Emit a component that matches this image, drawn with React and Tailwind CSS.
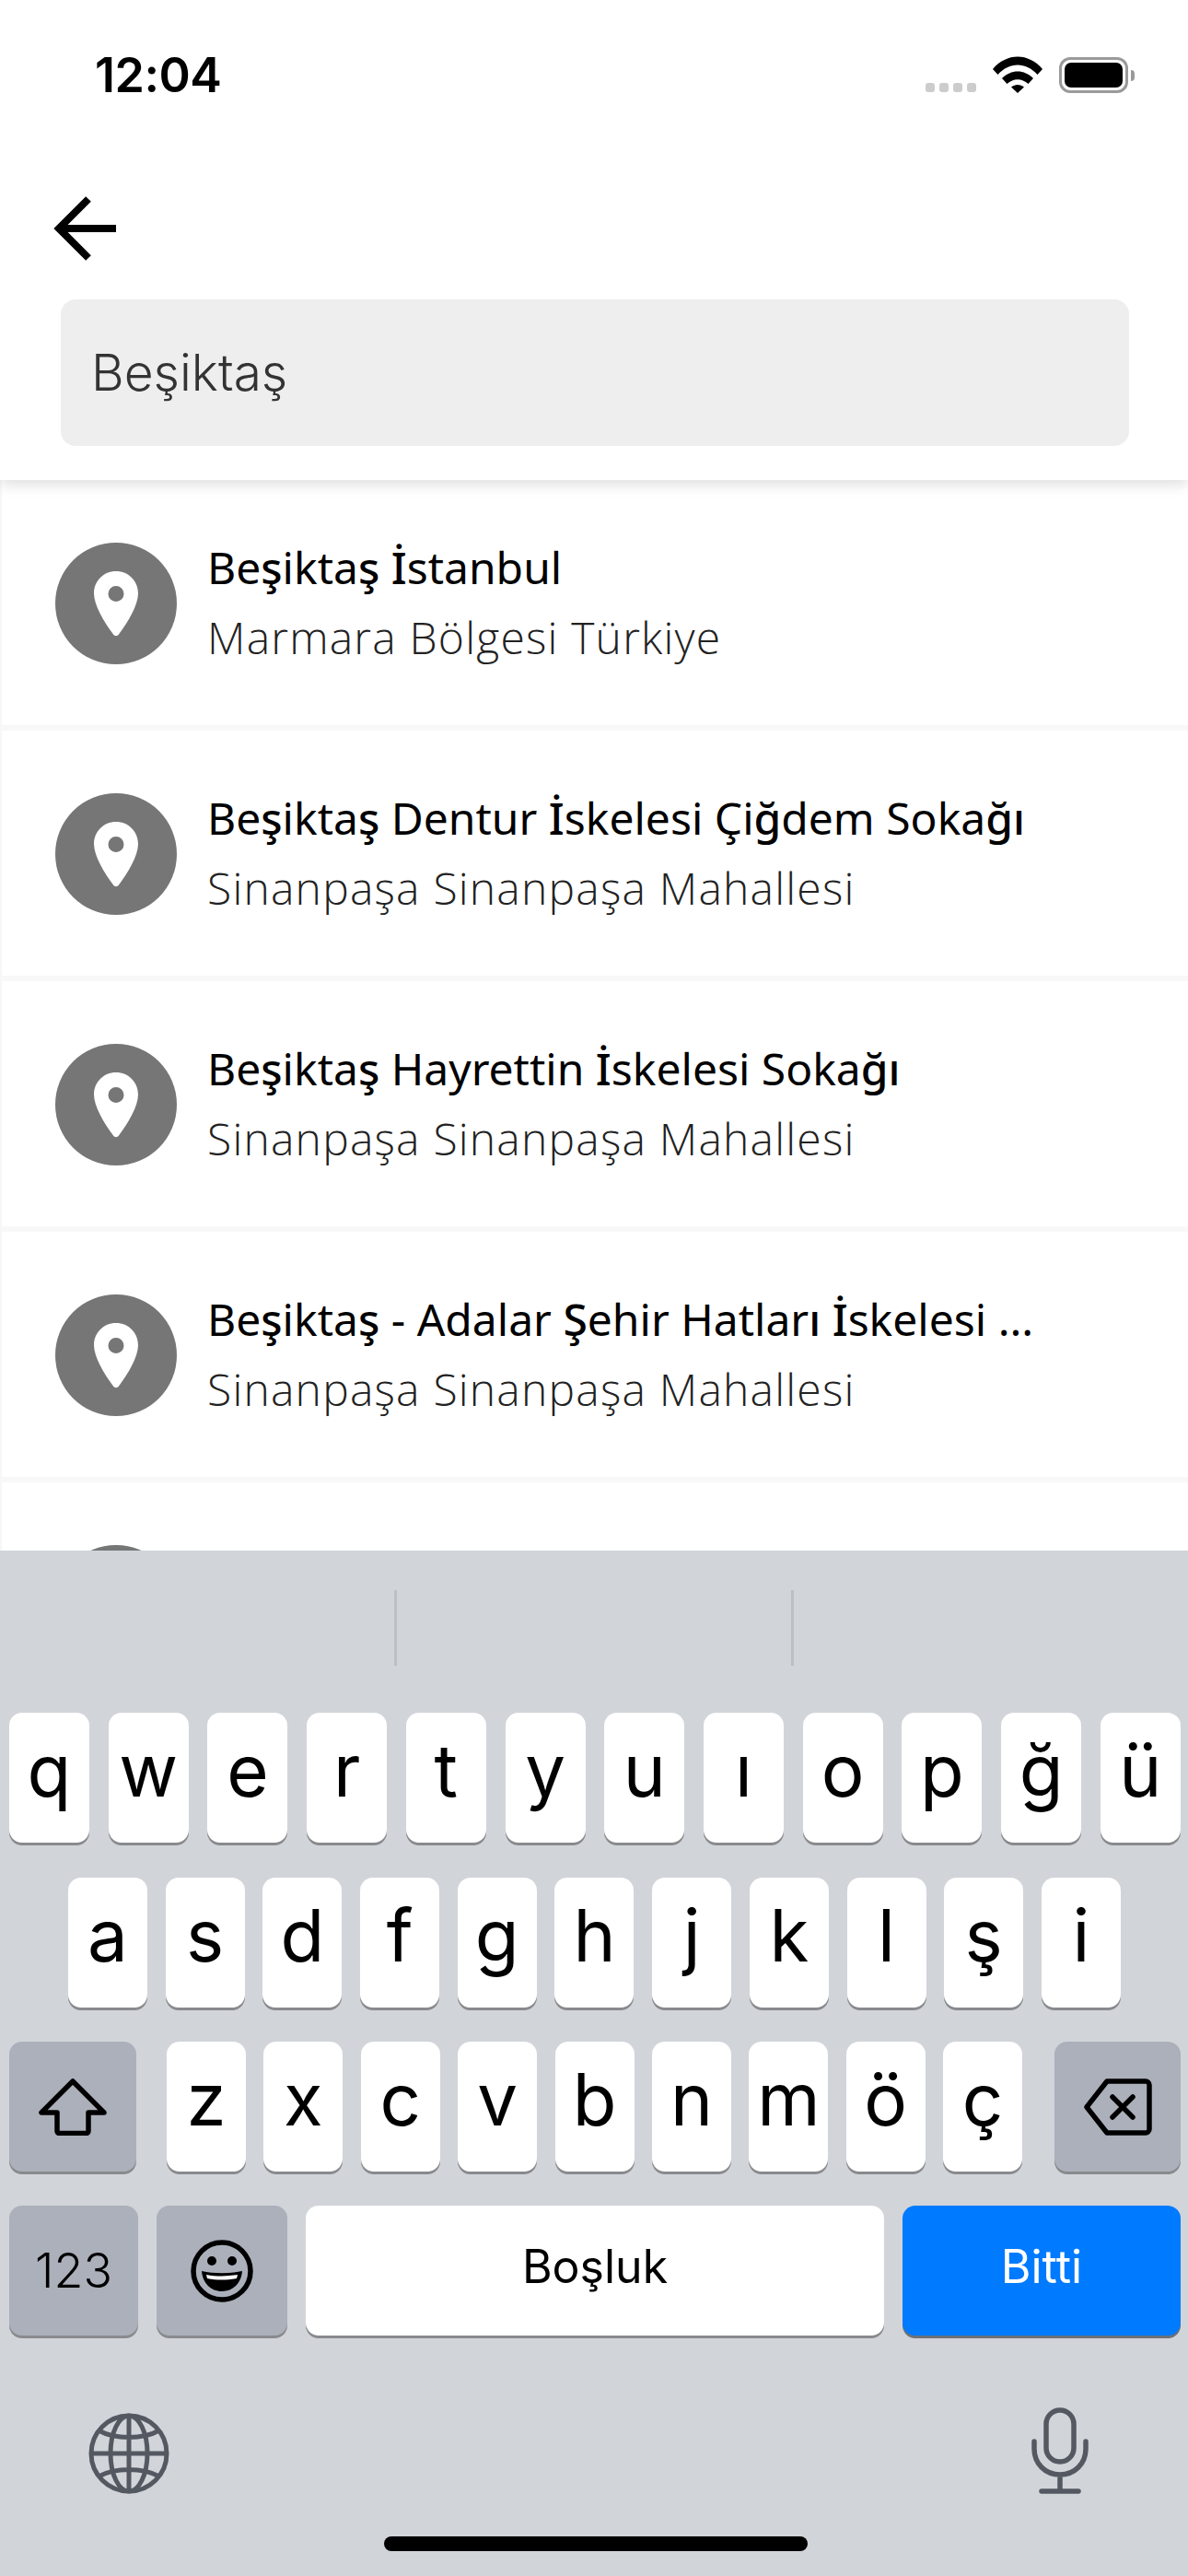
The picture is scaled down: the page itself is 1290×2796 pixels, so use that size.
const rows = [
  { title: 'Beşiktaş İstanbul', sub: 'Marmara Bölgesi Türkiye' },
  { title: 'Beşiktaş Dentur İskelesi Çiğdem Sokağı', sub: 'Sinanpaşa Sinanpaşa Mahallesi' },
  { title: 'Beşiktaş Hayrettin İskelesi Sokağı', sub: 'Sinanpaşa Sinanpaşa Mahallesi' },
  { title: 'Beşiktaş - Adalar Şehir Hatları İskelesi ...', sub: 'Sinanpaşa Sinanpaşa Mahallesi' },
];

const row1 = ['q', 'w', 'e', 'r', 't', 'y', 'u', 'ı', 'o', 'p', 'ğ', 'ü'];
const row2 = ['a', 's', 'd', 'f', 'g', 'h', 'j', 'k', 'l', 'ş', 'i'];
const row3 = ['z', 'x', 'c', 'v', 'b', 'n', 'm', 'ö', 'ç'];

// the turkish letters come out heavier than the rest of the title
function Title({ text }) {
  return text.split(/([şŞİğı])/).map((part, i) =>
    i % 2 === 1 ? <span key={i} className="font-medium">{part}</span> : part
  );
}

function Pin() {
  return (
    <div className="w-[132px] h-[132px] mt-[2px] rounded-full bg-[#767676] flex items-center justify-center shrink-0">
      <svg width="50" height="72" viewBox="0 0 50 72">
        <path
          fillRule="evenodd"
          d="M25 1C11.5 1 1 11.5 1 25c0 13 11 31 21 44.5 1.6 2.2 4.4 2.2 6 0C38 56 49 38 49 25 49 11.5 38.500 1 25 1Zm0 16a8.500 8.500 0 1 1 0 17 8.500 8.500 0 0 1 0-17Z"
          fill="#fff"
        />
      </svg>
    </div>
  );
}

function Key({ label, className = 'w-[86px]' }) {
  return (
    <div className={`${className} h-[141px] pb-[17px] rounded-[14px] bg-white shadow-[0_3px_0_#898a8d] flex items-center justify-center text-[78px] text-black font-['Inter',sans-serif]`}>
      {label}
    </div>
  );
}

function GreyKey({ children, className }) {
  return (
    <div className={`${className} h-[141px] shrink-0 rounded-[14px] bg-[#abb0ba] shadow-[0_3px_0_#898a8d] flex items-center justify-center text-black font-['Inter',sans-serif]`}>
      {children}
    </div>
  );
}

export default function App() {
  return (
    <div className="w-[1290px] h-[2796px] bg-white flex flex-col overflow-hidden font-['Inter',sans-serif]">
      {/* Header */}
      <div className="relative z-10 h-[521px] bg-white shadow-[0_5px_14px_rgba(0,0,0,0.13)] shrink-0">
        <div className="h-[164px] flex items-start justify-between pt-[51px] pl-[103px] pr-[58px]">
          <span className="text-[52px] leading-[62px] font-semibold tracking-[-0.5px] text-black">12:04</span>
          <div className="flex items-end gap-[18px] h-[41px] mt-[9px]">
            <div className="flex gap-[5px] pb-[1px]">
              <span className="w-[10px] h-[10px] rounded-[3px] bg-[#cccccc]" />
              <span className="w-[10px] h-[10px] rounded-[3px] bg-[#cccccc]" />
              <span className="w-[10px] h-[10px] rounded-[3px] bg-[#cccccc]" />
              <span className="w-[10px] h-[10px] rounded-[3px] bg-[#cccccc]" />
            </div>
            <svg width="54" height="40" viewBox="0 0 54 40">
              <path d="M0 14C15-4 39-4 54 14l-5.500 6C36 6 18 6 5.500 20Z" fill="#000" />
              <path d="M10 24c10-10 24-10 34 0l-5.500 6c-7-6.500-16-6.500-23 0Z" fill="#000" />
              <path d="M20 33.500c4-3.500 10-3.500 14 0L27 40Z" fill="#000" />
            </svg>
            <div className="flex items-center gap-[3px]">
              <div className="w-[75px] h-[39px] rounded-[12px] border-[3px] border-[#9a9a9a] p-[3px]">
                <div className="w-full h-full rounded-[7px] bg-black" />
              </div>
              <div className="w-[4px] h-[12px] rounded-r-full bg-[#9a9a9a]" />
            </div>
          </div>
        </div>
        <svg className="ml-[58px] mt-[48px]" width="72" height="72" viewBox="0 0 72 72">
          <path d="M38 4 6 36l32 32M6 36h62" fill="none" stroke="#000" strokeWidth="8" />
        </svg>
        <div className="mx-[66px] mt-[41px] w-[1160px] h-[159px] rounded-[16px] bg-[#eeeeee] flex items-center pl-[33px] text-[55px] font-light text-[#333333]">
          Beşiktaş
        </div>
      </div>

      {/* Results */}
      <div className="flex-1 min-h-0 overflow-hidden border-l-2 border-[#f7f7f7]">
        {[...rows, { title: '', sub: '' }].map((r, i) => (
          <div key={i} className="h-[272px] border-b-[6px] border-[#f8f8f8] pl-[58px] flex items-center gap-[33px]">
            <Pin />
            <div className="flex flex-col">
              <span className="text-[48px] leading-[76px] text-black font-['Noto_Sans',sans-serif]"><Title text={r.title} /></span>
              <span className="text-[48px] leading-[76px] font-light tracking-[1.2px] text-[#222222] font-['Open_Sans',sans-serif]">{r.sub}</span>
            </div>
          </div>
        ))}
      </div>

      {/* Keyboard */}
      <div className="relative h-[1113px] shrink-0 bg-[#d1d4d9] flex flex-col">
        <div className="h-[176px] flex items-center pl-[428px] pb-[9px]">
          <span className="w-[3px] h-[82px] bg-[#bcbfc5]" />
          <span className="w-[3px] h-[82px] bg-[#bcbfc5] ml-[428px]" />
        </div>
        <div className="flex justify-between pl-[10px] pr-[8px]">
          {row1.map((k) => <Key key={k} label={k} className="w-[87px]" />)}
        </div>
        <div className="flex justify-between pl-[74px] pr-[73px] mt-[38px]">
          {row2.map((k) => <Key key={k} label={k} />)}
        </div>
        <div className="flex pl-[10px] pr-[8px] mt-[37px]">
          <GreyKey className="w-[138px]">
            <svg width="74" height="62" viewBox="0 0 74 62">
              <path d="M37 3 3 37h17v20c0 1.500 1 2.500 2.500 2.500h29c1.500 0 2.500-1 2.500-2.500V37h17Z" fill="none" stroke="#000" strokeWidth="5.500" strokeLinejoin="round" />
            </svg>
          </GreyKey>
          <div className="flex gap-[19.4px] ml-[33px]">
            {row3.map((k) => <Key key={k} label={k} />)}
          </div>
          <GreyKey className="w-[137px] ml-auto">
            <svg width="74" height="62" viewBox="0 0 74 62">
              <path d="M25 3h42c2 0 4 2 4 4v48c0 2-2 4-4 4H25L3 31Z" fill="none" stroke="#000" strokeWidth="5.500" strokeLinejoin="round" />
              <path d="M31 20l22 22M53 20 31 42" fill="none" stroke="#000" strokeWidth="5.500" strokeLinecap="round" />
            </svg>
          </GreyKey>
        </div>
        <div className="flex gap-[20px] pl-[10px] pr-[8px] mt-[37px]">
          <GreyKey className="w-[140px] text-[52px] font-light">123</GreyKey>
          <GreyKey className="w-[142px]">
            <svg width="70" height="70" viewBox="0 0 70 70">
              <circle cx="35" cy="35" r="31" fill="none" stroke="#000" strokeWidth="5.500" />
              <circle cx="24" cy="24" r="5" fill="#000" />
              <circle cx="46" cy="24" r="5" fill="#000" />
              <path d="M13 35c13 3 31 3 44 0-1 13-10 22-22 22S14 48 13 35Z" fill="#000" />
              <path d="M18 39c11 2 23 2 34 0l-1 4c-10 2-22 2-32 0Z" fill="#fff" />
            </svg>
          </GreyKey>
          <div className="w-[628px] h-[141px] shrink-0 rounded-[14px] bg-white shadow-[0_3px_0_#898a8d] flex items-center justify-center pb-[8px] text-[50px] text-black">Boşluk</div>
          <div className="w-[302px] h-[141px] shrink-0 rounded-[14px] bg-[#007aff] shadow-[0_3px_0_#6b7178] flex items-center justify-center pb-[8px] text-[50px] text-white">Bitti</div>
        </div>
        <div className="flex justify-between items-start pl-[95px] pr-[108px] mt-[78px]">
          <svg className="mt-[5px]" width="90" height="90" viewBox="0 0 90 90" fill="none" stroke="#545961" strokeWidth="5">
            <circle cx="45" cy="45" r="41" />
            <ellipse cx="45" cy="45" rx="20" ry="41" />
            <path d="M45 4v82M4 45h82M12 20c18 10 48 10 66 0M12 70c18-10 48-10 66 0" />
          </svg>
          <svg width="62" height="94" viewBox="0 0 62 94" fill="none" stroke="#545961" strokeWidth="5.500" strokeLinecap="round">
            <rect x="16" y="3" width="30" height="56" rx="15" />
            <path d="M3 37v8c0 16 12 28 28 28s28-12 28-28v-8M31 73v17M11 91h40" />
          </svg>
        </div>
        <div className="absolute left-[417px] bottom-[27px] w-[460px] h-[16px] rounded-full bg-black" />
      </div>
    </div>
  );
}
